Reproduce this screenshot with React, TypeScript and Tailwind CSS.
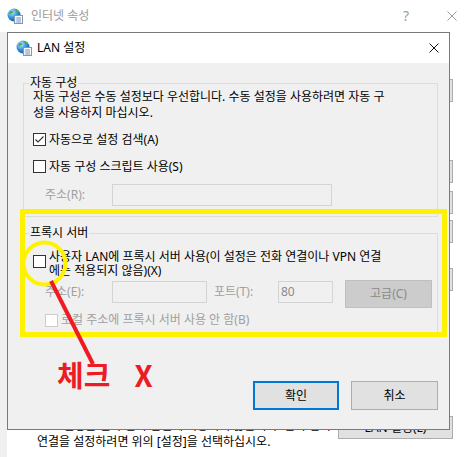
import React from 'react';

function InetIcon({ id }: { id: string }) {
  return (
    <svg width="16" height="16" viewBox="0 0 16 16">
      <defs>
        <radialGradient id={id} cx="0.35" cy="0.3" r="0.8">
          <stop offset="0" stopColor="#b5e6ff" />
          <stop offset="0.55" stopColor="#2f8bdc" />
          <stop offset="1" stopColor="#13509a" />
        </radialGradient>
      </defs>
      <circle cx="7" cy="7" r="6.5" fill={`url(#${id})`} />
      <path d="M2.6 3.6C4 2.4 5.8 2.8 6.4 4.3 5.5 5.4 4.2 5.2 3.6 6.8 2.6 6 2.1 4.7 2.6 3.6Z" fill="#45b33d" />
      <path d="M8 1.1C10 1.4 11.6 2.7 12.2 4.3L9.6 4.6C8.9 3.6 8.3 2.5 8 1.1Z" fill="#45b33d" />
      <rect x="7.5" y="7.5" width="8" height="8" fill="#ffffff" stroke="#8397b0" />
      <path d="M10 10h4M10 12h4M10 14h4" stroke="#6f8db5" />
      <path d="M8.8 10h0.8M8.8 12h0.8M8.8 14h0.8" stroke="#2a6fd0" />
    </svg>
  );
}

function CloseGlyph({ color }: { color: string }) {
  return (
    <svg width="10" height="10" viewBox="0 0 10 10">
      <path d="M0.5 0.5L9.5 9.5M9.5 0.5L0.5 9.5" stroke={color} strokeWidth="1" />
    </svg>
  );
}

function CheckBox({ checked = false, disabled = false }: { checked?: boolean; disabled?: boolean }) {
  return (
    <span
      className={`w-[13px] h-[13px] shrink-0 border flex items-center justify-center bg-white ${
        disabled ? 'border-[#cccccc]' : 'border-[#333333]'
      }`}
    >
      {checked && (
        <svg width="11" height="11" viewBox="0 0 11 11">
          <path d="M1.5 5.5L4 8L9.5 2.5" stroke="#333333" strokeWidth="1.1" fill="none" />
        </svg>
      )}
    </span>
  );
}

function SideButton({ mt }: { mt: string }) {
  return <div className={`${mt} w-[115px] h-[23px] border border-[#adadad] bg-[#e1e1e1]`} />;
}

export default function App() {
  return (
    <div className="relative w-[465px] h-[457px] overflow-hidden bg-white text-[12px] text-black font-['Noto_Sans','Noto_Sans_CJK_KR',sans-serif]">
      {/* parent window: 인터넷 속성 */}
      <div className="flex flex-col h-full">
        <div className="h-[32px] shrink-0 flex items-center bg-white">
          <span className="ml-[7px] flex">
            <InetIcon id="g1" />
          </span>
          <span className="ml-[8px] text-[#9c9c9c] leading-[16px]">인터넷 속성</span>
          <span className="ml-auto text-[14px] text-[#9c9c9c] leading-[16px]">?</span>
          <span className="ml-[38px] mr-[8px] flex">
            <CloseGlyph color="#9c9c9c" />
          </span>
        </div>
        <div className="flex flex-1">
          <div className="w-[7px] bg-[#f0f0f0]" />
          <div className="flex-1 flex flex-col">
            <div className="flex flex-col items-end pr-[12px]">
              <SideButton mt="mt-[47px]" />
              <SideButton mt="mt-[58px]" />
              <SideButton mt="mt-[8px]" />
              <SideButton mt="mt-[6px]" />
              <SideButton mt="mt-[25px]" />
            </div>
            <div className="mt-[125px] flex items-start pr-[12px]">
              <div className="pl-[30px] pt-[2px] leading-[16px] whitespace-nowrap">
                <div>LAN 설정은 전화 접속 연결에 적용되지 않습니다. 전화 접속</div>
                <div>연결을 설정하려면 위의 [설정]을 선택하십시오.</div>
              </div>
              <div className="ml-auto w-[115px] h-[23px] border border-[#adadad] bg-[#e1e1e1] flex items-center justify-center leading-[16px]">
                LAN 설정(L)
              </div>
            </div>
          </div>
        </div>
      </div>

      {/* LAN 설정 dialog */}
      <div className="absolute left-[7px] top-[32px] w-[443px] h-[398px] border border-[#7a7a7a] bg-[#f0f0f0] flex flex-col">
        <div className="h-[30px] shrink-0 bg-white flex items-center pl-[8px]">
          <InetIcon id="g2" />
          <span className="ml-[5px] leading-[16px]">LAN 설정</span>
          <span className="ml-auto mr-[10px] flex">
            <CloseGlyph color="#111111" />
          </span>
        </div>

        <div className="flex-1 flex flex-col pl-[15px] pr-[11px]">
          {/* 자동 구성 */}
          <div className="relative mt-[20px] border border-[#dcdcdc] pl-[9px] pt-[5px] pb-[10px]">
            <span className="absolute left-[5px] -top-[6px] px-[1px] bg-[#f0f0f0] leading-[10px]">자동 구성</span>
            <div className="leading-[16px] whitespace-nowrap">
              <div>자동 구성은 수동 설정보다 우선합니다. 수동 설정을 사용하려면 자동 구</div>
              <div>성을 사용하지 마십시오.</div>
            </div>
            <div className="mt-[10px] h-[17px] flex items-center">
              <CheckBox checked />
              <span className="ml-[3px]">자동으로 설정 검색(A)</span>
            </div>
            <div className="mt-[10px] h-[17px] flex items-center">
              <CheckBox />
              <span className="ml-[3px]">자동 구성 스크립트 사용(S)</span>
            </div>
            <div className="mt-[9px] h-[22px] flex items-center">
              <span className="ml-[12px] w-[67px] text-[#a0a0a0]">주소(R):</span>
              <div className="w-[220px] h-[22px] border border-[#d4d4d4] bg-[#f0f0f0]" />
            </div>
          </div>

          {/* 프록시 서버 */}
          <div className="relative mt-[16px] border border-[#dcdcdc] pl-[9px] pt-[16px] pb-[6px]">
            <span className="absolute left-[5px] -top-[6px] px-[1px] bg-[#f0f0f0] leading-[10px]">프록시 서버</span>
            <div className="flex items-start">
              <span className="mt-[5px] flex">
                <CheckBox />
              </span>
              <div className="ml-[3px] leading-[14px] whitespace-nowrap">
                <div>사용자 LAN에 프록시 서버 사용(이 설정은 전화 연결이나 VPN 연결</div>
                <div>에는 적용되지 않음)(X)</div>
              </div>
            </div>
            <div className="mt-[2px] h-[28px] flex items-start text-[#a0a0a0]">
              <span className="ml-[12px] w-[67px] mt-[1px] leading-[22px]">주소(E):</span>
              <div className="mt-[1px] w-[95px] h-[22px] border border-[#d4d4d4] bg-[#f0f0f0]" />
              <span className="ml-[7px] w-[64px] mt-[1px] leading-[22px]">포트(T):</span>
              <div className="mt-[1px] w-[55px] h-[22px] border border-[#d4d4d4] bg-[#f0f0f0] pl-[2px] leading-[20px] text-[#8a8a8a]">
                80
              </div>
              <div className="ml-[12px] w-[87px] h-[28px] border border-[#bfbfbf] bg-[#cccccc] flex items-center justify-center text-[#8a8a8a]">
                고급(C)
              </div>
            </div>
            <div className="mt-[5px] h-[14px] flex items-center">
              <span className="ml-[12px] flex">
                <CheckBox disabled />
              </span>
              <span className="ml-[3px] text-[#a0a0a0]">로컬 주소에 프록시 서버 사용 안 함(B)</span>
            </div>
          </div>

          <div className="mt-auto pb-[19px] flex justify-end gap-[12px]">
            <div className="w-[86px] h-[29px] border-2 border-[#0078d7] bg-[#e1e1e1] flex items-center justify-center">
              확인
            </div>
            <div className="w-[87px] h-[29px] border border-[#adadad] bg-[#e1e1e1] flex items-center justify-center">
              취소
            </div>
          </div>
        </div>
      </div>

      {/* annotations */}
      <svg className="absolute left-0 top-0 pointer-events-none" width="465" height="457" viewBox="0 0 465 457">
        <rect x="22.5" y="211.5" width="422" height="123" fill="none" stroke="#fff200" strokeWidth="5" />
        <circle cx="44.5" cy="263.5" r="21" fill="none" stroke="#fff200" strokeWidth="4" />
        <line x1="51" y1="281" x2="93" y2="364" stroke="#ed1c24" strokeWidth="4" />
      </svg>
      <div className="absolute left-[57px] top-[360px] flex items-start text-[29px] leading-[29px] font-bold text-[#ed1c24] font-['Noto_Sans_CJK_KR',sans-serif]">
        <span>체크</span>
        <span className="ml-[24px]">X</span>
      </div>
    </div>
  );
}
